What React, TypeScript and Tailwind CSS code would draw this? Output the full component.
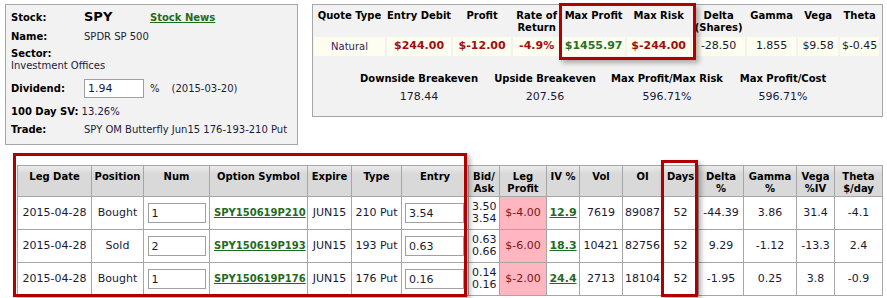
import React from 'react';

const red = 'text-[#a30d0d] font-bold text-[11px]';
const green = 'text-[#267326] font-bold text-[11px]';
const plain = 'text-[#1a1a33] text-[11px]';

const quoteCols = [
  { h: ['Quote Type'], w: 'w-[71px]', v: 'Natural', cls: 'text-[10px] text-[#3a1a50]' },
  { h: ['Entry Debit'], w: 'w-[64px]', v: '$244.00', cls: red },
  { h: ['Profit'], w: 'w-[58px]', v: '$-12.00', cls: red },
  { h: ['Rate of', 'Return'], w: 'w-[47px]', v: '-4.9%', cls: red },
  { h: ['Max Profit'], w: 'w-[63px]', v: '$1455.97', cls: green },
  { h: ['Max Risk'], w: 'w-[63px]', v: '$-244.00', cls: red },
  { h: ['Delta', '(Shares)'], w: 'w-[53px]', v: '-28.50', cls: plain },
  { h: ['Gamma'], w: 'w-[49px]', v: '1.855', cls: plain },
  { h: ['Vega'], w: 'w-[40px]', v: '$9.58', cls: plain },
  { h: ['Theta'], w: 'w-[39px]', v: '$-0.45', cls: plain },
];

const summary = [
  { label: 'Downside Breakeven', value: '178.44', w: 'w-[130px]' },
  { label: 'Upside Breakeven', value: '207.56', w: 'w-[122px]' },
  { label: 'Max Profit/Max Risk', value: '596.71%', w: 'w-[122px]' },
  { label: 'Max Profit/Cost', value: '596.71%', w: 'w-[110px]' },
];

const legHeaders = [
  { h: ['Leg Date'], w: 'w-[74px]' },
  { h: ['Position'], w: 'w-[52px]' },
  { h: ['Num'], w: 'w-[66px]' },
  { h: ['Option Symbol'], w: 'w-[98px]' },
  { h: ['Expire'], w: 'w-[44px]' },
  { h: ['Type'], w: 'w-[50px]' },
  { h: ['Entry'], w: 'w-[67px]' },
  { h: ['Bid/', 'Ask'], w: 'w-[31px]' },
  { h: ['Leg', 'Profit'], w: 'w-[47px]' },
  { h: ['IV %'], w: 'w-[33px]' },
  { h: ['Vol'], w: 'w-[43px]' },
  { h: ['OI'], w: 'w-[40px]' },
  { h: ['Days'], w: 'w-[36px]' },
  { h: ['Delta', '%'], w: 'w-[45px]' },
  { h: ['Gamma', '%'], w: 'w-[53px]' },
  { h: ['Vega', '%IV'], w: 'w-[38px]' },
  { h: ['Theta', '$/day'], w: 'w-[48px]' },
];

const legs = [
  { date: '2015-04-28', pos: 'Bought', num: '1', sym: 'SPY150619P210', exp: 'JUN15', type: '210 Put', entry: '3.54', bid: '3.50', ask: '3.54', profit: '$-4.00', iv: '12.9', vol: '7619', oi: '89087', days: '52', delta: '-44.39', gamma: '3.86', vega: '31.4', theta: '-4.1' },
  { date: '2015-04-28', pos: 'Sold', num: '2', sym: 'SPY150619P193', exp: 'JUN15', type: '193 Put', entry: '0.63', bid: '0.63', ask: '0.66', profit: '$-6.00', iv: '18.3', vol: '10421', oi: '82756', days: '52', delta: '9.29', gamma: '-1.12', vega: '-13.3', theta: '2.4' },
  { date: '2015-04-28', pos: 'Bought', num: '1', sym: 'SPY150619P176', exp: 'JUN15', type: '176 Put', entry: '0.16', bid: '0.14', ask: '0.16', profit: '$-2.00', iv: '24.4', vol: '2713', oi: '18104', days: '52', delta: '-1.95', gamma: '0.25', vega: '3.8', theta: '-0.9' },
];

const td = 'border border-[#a6a6a6] text-center align-middle text-[11px] text-[#1a1a33] px-0';

function StockPanel() {
  return (
    <div className="w-[293px] h-[141px] border border-[#a6a6a6] bg-[#f2f2f2] pl-[5px] pt-[4px] text-[10px] text-[#1c1c3c]">
      <div className="flex items-center h-[16px]">
        <span className="w-[73px] font-bold text-black">Stock:</span>
        <span className="w-[66px] text-[13px] font-bold text-black">SPY</span>
        <span className="font-bold text-[#1f6b1f] underline">Stock News</span>
      </div>
      <div className="flex items-center h-[12px] mt-[5px]">
        <span className="w-[73px] font-bold text-black">Name:</span>
        <span>SPDR SP 500</span>
      </div>
      <div className="h-[12px] mt-[6px] leading-[12px] font-bold text-black">Sector:</div>
      <div className="h-[12px] leading-[12px]">Investment Offices</div>
      <div className="flex items-center h-[19px] mt-[7px]">
        <span className="w-[73px] font-bold text-black">Dividend:</span>
        <input
          readOnly
          value="1.94"
          className="w-[60px] h-[19px] border border-[#a0a0a0] bg-white pl-[3px] text-[11px] text-[#1a1a33] outline-none"
        />
        <span className="ml-[6px]">%</span>
        <span className="ml-[12px]">(2015-03-20)</span>
      </div>
      <div className="flex items-center h-[12px] mt-[7px]">
        <span className="font-bold text-black">100 Day SV:</span>
        <span className="ml-[3px]">13.26%</span>
      </div>
      <div className="flex items-center h-[12px] mt-[6px]">
        <span className="w-[73px] font-bold text-black">Trade:</span>
        <span>SPY OM Butterfly Jun15 176-193-210 Put</span>
      </div>
    </div>
  );
}

function QuotePanel() {
  return (
    <div className="ml-[14px] w-[571px] h-[113px] border border-[#a6a6a6] bg-[#f2f2f2]">
      <table className="table-fixed border-separate border-spacing-x-[2px] border-spacing-y-[0px] -ml-[1px]">
        <thead>
          <tr>
            {quoteCols.map((c) => (
              <th key={c.v} className={`${c.w} h-[32px] align-top pt-[5px] text-[10px] leading-[12px] font-bold text-black whitespace-nowrap`}>
                {c.h.map((l) => (
                  <div key={l}>{l}</div>
                ))}
              </th>
            ))}
          </tr>
        </thead>
        <tbody>
          <tr>
            {quoteCols.map((c) => (
              <td key={c.v} className={`h-[19px] bg-[#fdfdf0] text-center align-middle whitespace-nowrap ${c.cls}`}>
                {c.v}
              </td>
            ))}
          </tr>
        </tbody>
      </table>
      <div className="flex pl-[41px] mt-[17px]">
        {summary.map((s) => (
          <div key={s.label} className={`${s.w} text-center`}>
            <div className="text-[10px] font-bold text-black leading-[12px] whitespace-nowrap">{s.label}</div>
            <div className="text-[11px] text-[#1a1a33] leading-[13px] mt-[5px]">{s.value}</div>
          </div>
        ))}
      </div>
    </div>
  );
}

function LegsTable() {
  return (
    <table className="table-fixed border-collapse w-[865px] ml-[17px] mt-[20px]">
      <thead>
        <tr className="bg-gradient-to-b from-[#ececec] from-0% to-[#d9d9d9] to-25%">
          {legHeaders.map((c) => (
            <th key={c.h.join()} className={`${c.w} h-[31px] border border-[#a6a6a6] align-top pt-[5px] text-[10px] leading-[12px] font-bold text-black whitespace-nowrap`}>
              {c.h.map((l) => (
                <div key={l}>{l}</div>
              ))}
            </th>
          ))}
        </tr>
      </thead>
      <tbody>
        {legs.map((r) => (
          <tr key={r.sym} className="h-[33px] bg-white">
            <td className={td}>{r.date}</td>
            <td className={td}>{r.pos}</td>
            <td className={td}>
              <input
                readOnly
                value={r.num}
                className="block mx-auto w-[58px] h-[20px] border border-[#a0a0a0] bg-white pl-[3px] text-[11px] outline-none"
              />
            </td>
            <td className={`${td} text-left pl-[4px]`}>
              <span className="text-[10px] font-bold text-[#1f6b1f] underline">{r.sym}</span>
            </td>
            <td className={td}>{r.exp}</td>
            <td className={td}>{r.type}</td>
            <td className={td}>
              <input
                readOnly
                value={r.entry}
                className="block ml-[3px] w-[59px] h-[20px] border border-[#a0a0a0] bg-white pl-[3px] text-[11px] outline-none"
              />
            </td>
            <td className={`${td} text-left pl-[3px] leading-[12px]`}>
              <div>{r.bid}</div>
              <div>{r.ask}</div>
            </td>
            <td className={`${td} bg-[#ffb6c1] text-[#7a1515]`}>{r.profit}</td>
            <td className={td}>
              <span className="font-bold text-[#1f6b1f] underline">{r.iv}</span>
            </td>
            <td className={td}>{r.vol}</td>
            <td className={td}>{r.oi}</td>
            <td className={td}>{r.days}</td>
            <td className={td}>{r.delta}</td>
            <td className={td}>{r.gamma}</td>
            <td className={td}>{r.vega}</td>
            <td className={td}>{r.theta}</td>
          </tr>
        ))}
      </tbody>
    </table>
  );
}

export default function App() {
  return (
    <div className="relative w-[887px] h-[298px] overflow-hidden bg-white font-['DejaVu_Sans',Verdana,sans-serif]">
      <div className="flex items-start pt-[4px] pl-[5px]">
        <StockPanel />
        <QuotePanel />
      </div>
      <LegsTable />

      {/* highlight boxes */}
      <div className="absolute left-[559px] top-[3px] w-[137px] h-[57px] border-[3px] border-[#b00000] shadow-[3px_3px_5px_rgba(0,0,0,0.3)] pointer-events-none" />
      <div className="absolute left-[13px] top-[153px] w-[454px] h-[144px] border-[3px] border-[#b00000] shadow-[3px_3px_5px_rgba(0,0,0,0.3)] pointer-events-none" />
      <div className="absolute left-[661px] top-[160px] w-[37px] h-[137px] border-[3px] border-[#b00000] shadow-[3px_3px_5px_rgba(0,0,0,0.3)] pointer-events-none" />
    </div>
  );
}
